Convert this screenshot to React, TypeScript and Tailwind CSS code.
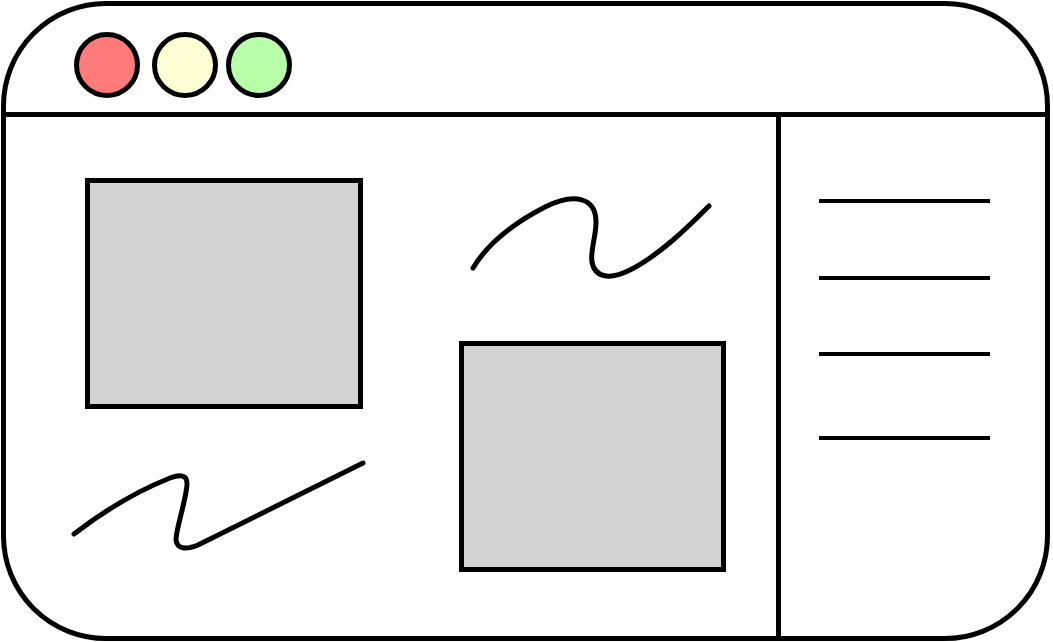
const Dot = ({ color, className }: { color: string; className?: string }) => (
  <div className={`size-[66px] rounded-full border-[5px] border-black ${color} ${className ?? ""}`} />
);

const TopSquiggle = () => (
  <svg width="260" height="100" viewBox="459 190 260 100" className="block">
    <path
      d="M473 268 C 488 243, 512 224, 545 207 C 575 192, 596 198, 596 222 C 596 238, 590 250, 592 262 C 595 278, 610 280, 630 270 C 660 255, 690 225, 709 206"
      fill="none"
      stroke="black"
      strokeWidth="5"
      strokeLinecap="round"
    />
  </svg>
);

const BottomSquiggle = () => (
  <svg width="320" height="110" viewBox="60 450 320 110" className="block">
    <path
      d="M74 534 C 105 510, 135 492, 170 478 C 186 472, 189 478, 186 492 C 183 510, 176 530, 176 540 C 177 549, 186 550, 198 545 L 363 463"
      fill="none"
      stroke="black"
      strokeWidth="5"
      strokeLinecap="round"
      strokeLinejoin="round"
    />
  </svg>
);

export default function App() {
  return (
    <div className="w-[1053px] h-[642px] bg-white overflow-hidden">
      <div className="m-[1px] w-[1049px] h-[640px] border-[5px] border-black rounded-[105px] overflow-hidden flex flex-col">
        <div className="h-[111px] shrink-0 border-b-[5px] border-black flex items-start pl-[68px] pt-[26px]">
          <Dot color="bg-[#ff7b7b]" />
          <Dot color="bg-[#ffffd5]" className="ml-[12px]" />
          <Dot color="bg-[#b9ffaa]" className="ml-[8px]" />
        </div>
        <div className="flex flex-1">
          <div className="w-[775px] shrink-0 border-r-[5px] border-black flex">
            <div className="w-[453px] shrink-0 pl-[54px] pt-[61px]">
              <div className="ml-[25px] w-[278px] h-[231px] border-[5px] border-black bg-[#d3d3d3]" />
              <div className="mt-[41px]">
                <BottomSquiggle />
              </div>
            </div>
            <div className="pt-[73px]">
              <TopSquiggle />
              <div className="mt-[51px] w-[267px] h-[231px] border-[5px] border-black bg-[#d3d3d3]" />
            </div>
          </div>
          <div className="flex-1 pl-[38px] pt-[82px] flex flex-col">
            <div className="w-[171px] h-[4px] bg-black" />
            <div className="mt-[73px] w-[171px] h-[4px] bg-black" />
            <div className="mt-[72px] w-[171px] h-[4px] bg-black" />
            <div className="mt-[80px] w-[171px] h-[4px] bg-black" />
          </div>
        </div>
      </div>
    </div>
  );
}
